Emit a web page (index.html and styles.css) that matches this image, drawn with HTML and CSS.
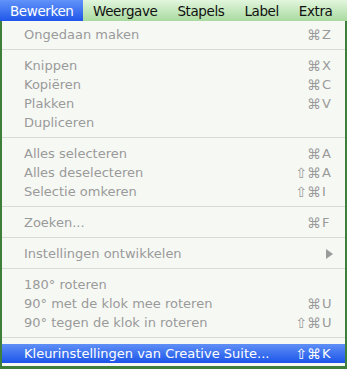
FILE: index.html
```html
<!DOCTYPE html>
<html lang="nl">
<head>
  <meta charset="UTF-8" />
  <title>Bewerken</title>
  <link rel="stylesheet" href="styles.css">
</head>
<body>
  <div class="menubar">
    <span class="title active">Bewerken</span>
    <span class="title">Weergave</span>
    <span class="title">Stapels</span>
    <span class="title">Label</span>
    <span class="title">Extra</span>
  </div>

  <div class="menu">
    <div class="item"><span class="label">Ongedaan maken</span><span class="mods">⌘</span><span class="key">Z</span></div>
    <div class="sep"></div>
    <div class="item"><span class="label">Knippen</span><span class="mods">⌘</span><span class="key">X</span></div>
    <div class="item"><span class="label">Kopiëren</span><span class="mods">⌘</span><span class="key">C</span></div>
    <div class="item"><span class="label">Plakken</span><span class="mods">⌘</span><span class="key">V</span></div>
    <div class="item"><span class="label">Dupliceren</span></div>
    <div class="sep"></div>
    <div class="item"><span class="label">Alles selecteren</span><span class="mods">⌘</span><span class="key">A</span></div>
    <div class="item"><span class="label">Alles deselecteren</span><span class="mods">⇧⌘</span><span class="key">A</span></div>
    <div class="item"><span class="label">Selectie omkeren</span><span class="mods">⇧⌘</span><span class="key">I</span></div>
    <div class="sep"></div>
    <div class="item"><span class="label">Zoeken...</span><span class="mods">⌘</span><span class="key">F</span></div>
    <div class="sep"></div>
    <div class="item"><span class="label">Instellingen ontwikkelen</span><span class="arrow"></span></div>
    <div class="sep"></div>
    <div class="item"><span class="label">180° roteren</span></div>
    <div class="item"><span class="label">90° met de klok mee roteren</span><span class="mods">⌘</span><span class="key">U</span></div>
    <div class="item"><span class="label">90° tegen de klok in roteren</span><span class="mods">⇧⌘</span><span class="key">U</span></div>
    <div class="sep"></div>
    <div class="item selected"><span class="label">Kleurinstellingen van Creative Suite...</span><span class="mods">⇧⌘</span><span class="key">K</span></div>
  </div>
</body>
</html>
```

FILE: styles.css
```css
body {
  margin: 0;
  background: #3f7f3c;
  font-family: 'DejaVu Sans', sans-serif;
  font-size: 13px;
  height: 369px;
  overflow: hidden;
}

.menubar {
  display: flex;
  height: 21px;
  background: linear-gradient(to bottom, #e2f6de, #a9da9f);
}

.title {
  display: flex;
  align-items: center;
  padding: 0 10px;
  color: #111;
  font-size: 13.5px;
  letter-spacing: -0.4px;
}

.title.active {
  width: 63px;
  background: linear-gradient(to bottom, #6193f8, #1f56ea);
  color: #fff;
}

.menu {
  margin: 0 2px;
  padding: 4px 0 3px;
  background: #f6f8f4;
}

.item {
  display: flex;
  align-items: center;
  height: 19px;
  padding: 0 10px 0 22px;
  color: #9a9a9a;
}

.item .label {
  flex: 1;
  white-space: nowrap;
}

.item .mods {
  text-align: right;
  font-size: 14px;
}

.item .key {
  width: 13px;
  padding-left: 1px;
}

.item .arrow {
  width: 0;
  height: 0;
  margin-right: 2px;
  border-top: 5px solid transparent;
  border-bottom: 5px solid transparent;
  border-left: 7px solid #9a9a9a;
}

.item.selected {
  background: linear-gradient(to bottom, #5f8ff6, #1c55e9);
  color: #fff;
}

.sep {
  height: 1px;
  margin: 5px 0 6px;
  background: #d9dbd7;
}
```
